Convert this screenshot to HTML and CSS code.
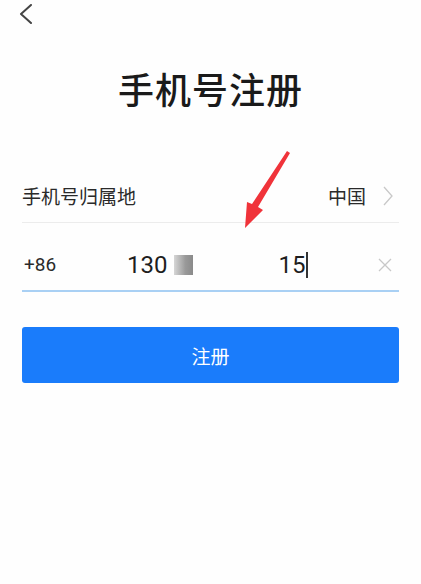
FILE: index.html
```html
<!DOCTYPE html>
<html lang="zh">
<head>
<meta charset="utf-8">
<link rel="stylesheet" href="styles.css">
</head>
<body>
<div class="page">
  <div class="topbar">
    <svg class="back" width="14" height="20" viewBox="0 0 14 20"><path d="M12 1 L2 10 L12 19" fill="none" stroke="#444" stroke-width="2" stroke-linecap="round" stroke-linejoin="round"/></svg>
  </div>
  <h1 class="title">手机号注册</h1>
  <div class="form">
    <div class="row region">
      <span class="label">手机号归属地</span>
      <span class="value">中国</span>
      <svg class="chev" width="10" height="20" viewBox="0 0 10 20"><path d="M1 1 L9 10 L1 19" fill="none" stroke="#c8c8c8" stroke-width="1.3"/></svg>
    </div>
    <div class="row phone">
      <span class="code">+86</span>
      <span class="number">
        <span class="digits">130</span>
        <span class="redact"></span>
        <span class="gap"></span>
        <span class="digits">15</span>
        <span class="cursor"></span>
      </span>
      <svg class="clear" width="14" height="14" viewBox="0 0 14 14"><path d="M1 1 L13 13 M13 1 L1 13" stroke="#c8c8c8" stroke-width="1.3"/></svg>
    </div>
    <button class="btn">注册</button>
  </div>
  <svg class="arrow" width="421" height="584" viewBox="0 0 421 584">
    <path d="M287 151 L290 153 L258 207 L263 210 L245 228 L247 202 L252 204 Z" fill="#f0333a"/>
  </svg>
</div>
</body>
</html>
```
FILE: styles.css
```css
html, body {
  margin: 0;
  padding: 0;
  background: #fefefe;
}
body {
  font-family: "Noto Sans CJK SC", "Noto Sans", Roboto, sans-serif;
  color: #222;
}
.page {
  position: relative;
  width: 421px;
  height: 584px;
  overflow: hidden;
}
.topbar {
  height: 28px;
  padding-left: 19px;
  padding-top: 4px;
  box-sizing: border-box;
}
.back {
  display: block;
}
.title {
  margin: 35px 0 0;
  height: 50px;
  line-height: 50px;
  font-size: 36px;
  font-weight: 500;
  text-align: center;
  color: #1a1a1a;
  letter-spacing: 1px;
}
.form {
  margin-top: 57px;
  padding: 0 22px;
}
.row {
  display: flex;
  align-items: center;
  box-sizing: border-box;
}
.region {
  height: 53px;
  border-bottom: 1px solid #ececec;
  padding-bottom: 1px;
}
.label {
  font-size: 19px;
  color: #2a2a2a;
  flex: 1;
}
.value {
  font-size: 19px;
  color: #2a2a2a;
  margin-right: 17px;
}
.chev {
  margin-right: 6px;
}
.phone {
  height: 69px;
  padding-top: 16px;
  border-bottom: 2px solid #a9d0f4;
}
.code {
  font-family: Roboto, "Noto Sans", sans-serif;
  font-size: 19px;
  color: #2a2a2a;
  width: 103px;
  padding-left: 2px;
}
.number {
  flex: 1;
  display: flex;
  align-items: center;
  font-family: Roboto, "Noto Sans", sans-serif;
  font-size: 24px;
  color: #1e1e1e;
}
.redact {
  width: 19px;
  height: 20px;
  margin-left: 7px;
  background: linear-gradient(90deg, #d6d6d6, #999 60%, #8a8a8a);
}
.gap {
  width: 85px;
}
.cursor {
  width: 1.5px;
  height: 26px;
  background: #333;
  margin-left: 1px;
}
.clear {
  margin-right: 7px;
}
.btn {
  display: block;
  width: 100%;
  height: 56px;
  margin-top: 35px;
  border: none;
  border-radius: 3px;
  background: #1a7cfb;
  color: #fff;
  font-family: "Noto Sans CJK SC", sans-serif;
  font-size: 19px;
  padding: 0;
}
.arrow {
  position: absolute;
  left: 0;
  top: 0;
  pointer-events: none;
}
```
